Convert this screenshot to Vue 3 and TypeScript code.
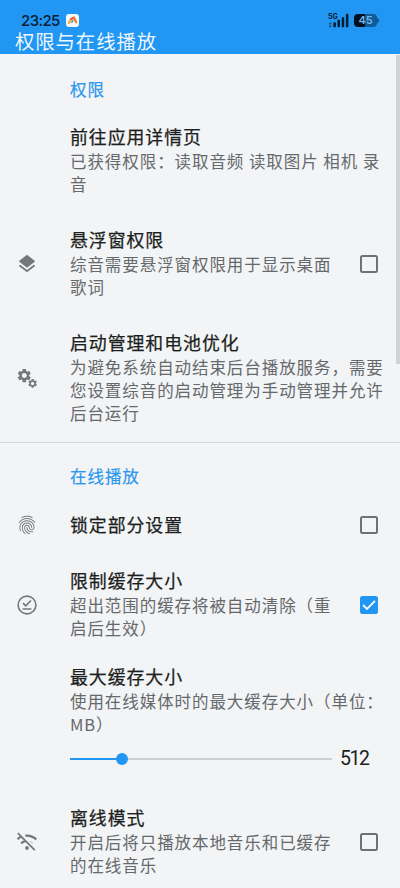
<script setup lang="ts">
import { ref } from 'vue'

type IconName = 'layers' | 'gears' | 'fingerprint' | 'pin' | 'offline'

interface Preference {
  title: string
  summary?: string
  icon?: IconName
  checked?: boolean
  slider?: { value: number; percent: number }
}

interface Group {
  name: string
  items: Preference[]
}

const groups = ref<Group[]>([
  {
    name: '权限',
    items: [
      { title: '前往应用详情页', summary: '已获得权限：读取音频 读取图片 相机 录\n音' },
      { title: '悬浮窗权限', summary: '综音需要悬浮窗权限用于显示桌面\n歌词', icon: 'layers', checked: false },
      {
        title: '启动管理和电池优化',
        summary: '为避免系统自动结束后台播放服务，需要\n您设置综音的启动管理为手动管理并允许\n后台运行',
        icon: 'gears',
      },
    ],
  },
  {
    name: '在线播放',
    items: [
      { title: '锁定部分设置', icon: 'fingerprint', checked: false },
      { title: '限制缓存大小', summary: '超出范围的缓存将被自动清除（重\n启后生效）', icon: 'pin', checked: true },
      {
        title: '最大缓存大小',
        summary: '使用在线媒体时的最大缓存大小（单位：\nMB）',
        slider: { value: 512, percent: 20 },
      },
      { title: '离线模式', summary: '开启后将只播放本地音乐和已缓存\n的在线音乐', icon: 'offline', checked: false },
    ],
  },
])

const gear =
  'M19.14 12.94c.04-.3.06-.61.06-.94 0-.32-.02-.64-.07-.94l2.03-1.58c.18-.14.23-.41.12-.61l-1.92-3.32c-.12-.22-.37-.29-.59-.22l-2.39.96c-.5-.38-1.03-.7-1.62-.94l-.36-2.54c-.04-.24-.24-.41-.48-.41h-3.84c-.24 0-.43.17-.47.41l-.36 2.54c-.59.24-1.13.57-1.62.94l-2.39-.96c-.22-.08-.47 0-.59.22L2.74 8.87c-.12.21-.08.47.12.61l2.03 1.58c-.05.3-.09.63-.09.94s.02.64.07.94l-2.03 1.58c-.18.14-.23.41-.12.61l1.92 3.32c.12.22.37.29.59.22l2.39-.96c.5.38 1.03.7 1.62.94l.36 2.54c.05.24.24.41.48.41h3.84c.24 0 .44-.17.47-.41l.36-2.54c.59-.24 1.13-.56 1.62-.94l2.39.96c.22.08.47 0 .59-.22l1.92-3.32c.12-.22.07-.47-.12-.61l-2.01-1.58zM12 15.6c-1.98 0-3.6-1.62-3.6-3.6s1.62-3.6 3.6-3.6 3.6 1.62 3.6 3.6-1.62 3.6-3.6 3.6z'

const fingerprint =
  'M17.81 4.47c-.08 0-.16-.02-.23-.06C15.66 3.42 14 3 12.01 3c-1.98 0-3.86.47-5.57 1.41-.24.13-.54.04-.68-.2-.13-.24-.04-.55.2-.68C7.82 2.52 9.86 2 12.01 2c2.13 0 3.99.47 6.03 1.52.25.13.34.43.21.67-.09.18-.26.28-.44.28zM3.5 9.72c-.1 0-.2-.03-.29-.09-.23-.16-.28-.47-.12-.7.99-1.4 2.25-2.5 3.75-3.27C9.98 4.04 14 4.03 17.15 5.65c1.5.77 2.76 1.86 3.75 3.25.16.22.11.54-.12.7-.23.16-.54.11-.7-.12-.9-1.26-2.04-2.25-3.39-2.94-2.87-1.47-6.54-1.47-9.4.01-1.36.7-2.5 1.7-3.4 2.96-.08.14-.23.21-.39.21zm6.25 12.07c-.13 0-.26-.05-.35-.15-.87-.87-1.34-1.43-2.01-2.64-.69-1.23-1.05-2.73-1.05-4.34 0-2.97 2.54-5.39 5.66-5.39s5.66 2.42 5.66 5.39c0 .28-.22.5-.5.5s-.5-.22-.5-.5c0-2.42-2.09-4.39-4.66-4.39-2.57 0-4.66 1.97-4.66 4.39 0 1.44.32 2.77.93 3.85.64 1.15 1.08 1.64 1.85 2.42.19.2.19.51 0 .71-.11.1-.24.15-.37.15zm7.17-1.85c-1.19 0-2.24-.3-3.1-.89-1.49-1.01-2.38-2.65-2.38-4.39 0-.28.22-.5.5-.5s.5.22.5.5c0 1.41.72 2.74 1.94 3.56.71.48 1.54.71 2.54.71.24 0 .64-.03 1.04-.1.27-.05.53.13.58.41.05.27-.13.53-.41.58-.57.11-1.07.12-1.21.12zM14.91 22c-.04 0-.09-.01-.13-.02-1.59-.44-2.63-1.03-3.72-2.1-1.4-1.39-2.17-3.24-2.17-5.22 0-1.62 1.38-2.94 3.08-2.94 1.7 0 3.08 1.32 3.08 2.94 0 1.07.93 1.94 2.08 1.94s2.08-.87 2.08-1.94c0-3.77-3.25-6.83-7.25-6.83-2.84 0-5.44 1.58-6.61 4.03-.39.81-.59 1.76-.59 2.8 0 .78.07 2.01.67 3.61.1.26-.03.55-.29.64-.26.1-.55-.04-.64-.29-.49-1.31-.73-2.61-.73-3.96 0-1.2.23-2.29.68-3.24 1.33-2.79 4.28-4.6 7.51-4.6 4.55 0 8.25 3.51 8.25 7.83 0 1.62-1.38 2.94-3.08 2.94s-3.08-1.32-3.08-2.94c0-1.07-.93-1.94-2.08-1.94s-2.08.87-2.08 1.94c0 1.71.66 3.31 1.87 4.51.95.94 1.86 1.46 3.27 1.85.27.07.42.35.35.61-.05.23-.26.38-.47.38z'

function toggle(item: Preference) {
  if (item.checked !== undefined) item.checked = !item.checked
}
</script>

<template>
  <main class="screen" lang="zh-CN">
    <header class="top">
      <div class="status">
        <span class="clock">23:25</span>
        <svg class="app-badge" width="13" height="13" viewBox="0 0 13 13">
          <rect width="13" height="13" rx="3" fill="#f4f8fb" />
          <path d="M2.8 8.8 5.4 5" stroke="#f5b32d" stroke-width="2.3" stroke-linecap="round" />
          <path d="M5.4 5 8 3.6" stroke="#ee5138" stroke-width="2.3" stroke-linecap="round" />
          <path d="M8 3.8 10.2 8.3" stroke="#e87b35" stroke-width="2.2" stroke-linecap="round" />
          <path d="M5.8 8.2 7 6.8" stroke="#3b7fd0" stroke-width="1.3" stroke-linecap="round" />
        </svg>
        <div class="signal">
          <span class="net">5G</span>
          <svg width="21" height="15" viewBox="0 0 21 15">
            <rect x="1.2" y="9.6" width="2" height="1.8" fill="#0c4f83" />
            <rect x="1.2" y="12.3" width="2" height="1.8" fill="#0c4f83" />
            <rect x="5.4" y="9.2" width="2.5" height="5" rx=".6" fill="#071e33" />
            <rect x="9.5" y="6.8" width="2.5" height="7.4" rx=".6" fill="#071e33" />
            <rect x="13.7" y="4.2" width="2.5" height="10" rx=".6" fill="#071e33" />
            <rect x="17.9" y=".8" width="2.5" height="13.4" rx=".6" fill="#071e33" />
          </svg>
        </div>
        <div class="battery"><span>45</span></div>
      </div>
      <h1>权限与在线播放</h1>
    </header>

    <section v-for="group in groups" :key="group.name" class="group">
      <h2>{{ group.name }}</h2>
      <div
        v-for="item in group.items"
        :key="item.title"
        class="row"
        :class="{ seek: item.slider, before: item.icon === 'pin' }"
        @click="toggle(item)"
      >
        <div class="icon">
          <svg v-if="item.icon === 'layers'" width="22" height="22" viewBox="0 0 24 24">
            <path d="M11.99 18.54l-7.37-5.73L3 14.07l9 7 9-7-1.63-1.27-7.38 5.74zM12 16l7.36-5.73L21 9l-9-7-9 7 1.63 1.27L12 16z" />
          </svg>
          <svg v-else-if="item.icon === 'gears'" width="22" height="22" viewBox="0 0 22 22">
            <path :d="gear" transform="translate(0 .3) scale(.69)" />
            <path :d="gear" transform="translate(11.2 11) scale(.45)" />
          </svg>
          <svg v-else-if="item.icon === 'fingerprint'" width="22" height="22" viewBox="0 0 24 24">
            <path :d="fingerprint" />
          </svg>
          <svg v-else-if="item.icon === 'pin'" class="line" width="22" height="22" viewBox="0 0 22 22">
            <circle cx="11" cy="11" r="8.9" />
            <path d="M7 9.1l2.8 2.7 5.2-5.3M6.6 15h8.8" />
          </svg>
          <svg v-else-if="item.icon === 'offline'" class="line" width="22" height="22" viewBox="0 0 22 22">
            <path d="M1.8 2.2 18.8 19.2" stroke-width="1.8" />
            <path d="M9.3 4.6C13.5 4.2 17.4 5.7 20.3 8.4M1.5 8.1C2.8 6.9 4 6.1 5.5 5.4M5.1 12.4C6.3 11.2 7.6 10.5 9.2 10.1" stroke-width="2.2" />
            <path d="M14.1 10.6c1.1.4 2 .9 2.9 1.7" stroke-width="1" opacity=".5" />
            <circle cx="11" cy="17" r="1.9" fill="#75787b" stroke="none" />
          </svg>
        </div>
        <div class="body">
          <h3>{{ item.title }}</h3>
          <p v-if="item.summary">{{ item.summary }}</p>
          <div v-if="item.slider" class="slider">
            <div class="track">
              <div class="fill" :style="{ width: item.slider.percent + '%' }"><i></i></div>
            </div>
            <span>{{ item.slider.value }}</span>
          </div>
        </div>
        <div v-if="item.checked !== undefined" class="box" :class="{ on: item.checked }">
          <svg v-if="item.checked" width="18" height="18" viewBox="0 0 18 18">
            <path d="M3 9l4 4 8-8.2" />
          </svg>
        </div>
      </div>
    </section>
    <div class="scrollbar"></div>
  </main>
</template>

<style>
body {
  background: #f2f4f6;
}
</style>

<style scoped>
.screen {
  position: relative;
  box-sizing: border-box;
  width: 400px;
  height: 888px;
  overflow: hidden;
  background: #f2f4f6;
  color: #1c1e20;
  font-family: 'Noto Sans CJK SC', sans-serif;
}
h1,
h2,
h3,
p {
  margin: 0;
  font-weight: 400;
}
.top {
  height: 54px;
  background: #2196f3;
}
.status {
  display: flex;
  align-items: center;
  height: 28px;
  padding: 12px 21px 0 21px;
  box-sizing: border-box;
}
.clock {
  width: 45px;
  font: 500 15px/15px Inter, sans-serif;
  letter-spacing: -0.6px;
  color: #071e33;
}
.signal {
  position: relative;
  display: flex;
  margin-left: auto;
}
.net {
  position: absolute;
  left: 0;
  top: 0;
  font: 700 7px/7px Inter, sans-serif;
  color: #071e33;
}
.battery {
  position: relative;
  width: 23px;
  height: 13px;
  margin: 0 2px 0 5px;
  border-radius: 4px;
  background: linear-gradient(90deg, #04101c 48%, #115a94 48%);
  text-align: center;
  font: 600 11px/13px Inter, sans-serif;
  color: #6fb7ee;
}
.battery::after {
  content: '';
  position: absolute;
  right: -2px;
  top: 4px;
  width: 2px;
  height: 5px;
  border-radius: 0 2px 2px 0;
  background: #115a94;
}
h1 {
  padding-left: 15px;
  font-size: 19.4px;
  line-height: 26px;
  letter-spacing: 0.9px;
  color: #eef7fe;
}
.group {
  padding-bottom: 1px;
}
.group + .group {
  border-top: 1px solid #d5d7d9;
}
h2 {
  height: 55px;
  padding: 24px 0 0 70px;
  box-sizing: border-box;
  font-size: 16.5px;
  line-height: 23px;
  letter-spacing: 0.95px;
  color: #2b98ee;
  -webkit-text-stroke: 0.2px #2b98ee;
}
.group + .group h2 {
  height: 53.5px;
  padding-top: 22px;
}
.row {
  display: flex;
  align-items: center;
  padding: 16px 0;
}
.row.before {
  padding-bottom: 9px;
  padding-top: 16.5px;
}
.row.seek {
  padding-bottom: 14px;
}
.icon {
  display: flex;
  width: 54px;
  padding-left: 16px;
  fill: #75787b;
}
.line {
  fill: none;
  stroke: #75787b;
  stroke-width: 1.6;
}
.body {
  flex: 1;
}
h3 {
  padding-bottom: 1px;
  font-size: 17.9px;
  line-height: 23px;
  letter-spacing: 0.95px;
  white-space: nowrap;
  -webkit-text-stroke: 0.25px #1c1e20;
}
p {
  margin-top: 1px;
  font-size: 16.5px;
  line-height: 23px;
  letter-spacing: 0.93px;
  color: #66696c;
  white-space: pre;
}
.box {
  width: 18px;
  height: 18px;
  margin-right: 22px;
  box-sizing: border-box;
  border: 2px solid #6f7174;
  border-radius: 2.5px;
}
.box.on {
  border: 0;
  background: #2196f3;
}
.box svg {
  display: block;
  fill: none;
  stroke: #f4f9fd;
  stroke-width: 1.9;
}
.slider {
  display: flex;
  align-items: center;
  height: 40px;
  padding-top: 5px;
  box-sizing: border-box;
}
.track {
  width: 262px;
  height: 2px;
  background: #cccfd1;
}
.fill {
  display: flex;
  align-items: center;
  justify-content: flex-end;
  height: 2px;
  background: #2196f3;
}
.fill i {
  flex: none;
  width: 12px;
  height: 12px;
  margin-right: -6px;
  border-radius: 50%;
  background: #2196f3;
}
.slider span {
  margin-left: 8px;
  font: 400 19.5px/24px Roboto, sans-serif;
  letter-spacing: -1.5px;
}
.scrollbar {
  position: absolute;
  right: 0;
  top: 55px;
  width: 4px;
  height: 309px;
  background: #d0d2d3;
}
</style>
